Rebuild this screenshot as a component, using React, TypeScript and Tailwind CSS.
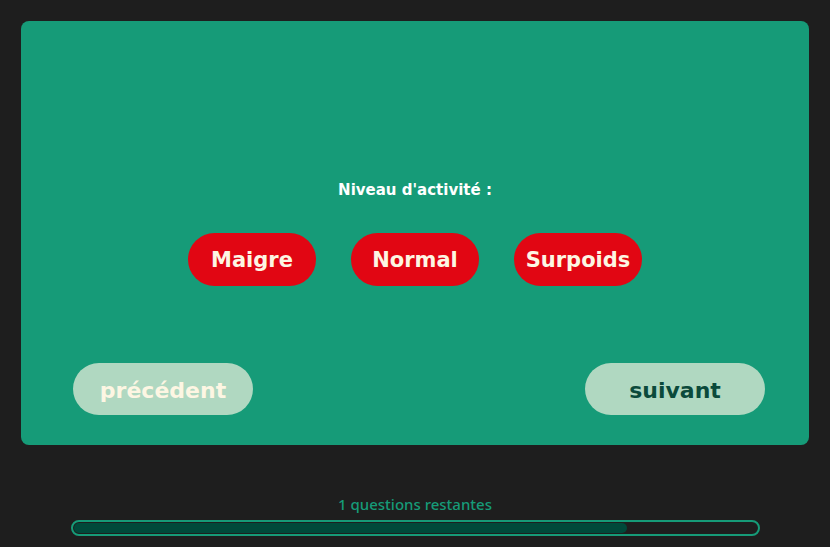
export default function App() {
  return (
    <div className="min-h-screen w-full bg-[#1e1e1e] pt-[21px] px-[21px] font-['Inter',sans-serif]">
      {/* Question card */}
      <div className="h-[424px] w-[788px] rounded-lg bg-[#169b78] flex flex-col">
        <div className="pt-[159px] text-center text-[15px] font-bold leading-5 text-white font-['DejaVu_Sans',sans-serif]">
          Niveau d'activité :
        </div>
        <div className="mt-[33px] flex justify-center gap-[35px]">
          {["Maigre", "Normal", "Surpoids"].map((label) => (
            <button
              key={label}
              className="h-[53px] w-[128px] rounded-full bg-[#e10613] pt-[2px] text-[21px] font-bold text-[#fdf6e3] font-['DejaVu_Sans',sans-serif]"
            >
              {label}
            </button>
          ))}
        </div>
        <div className="mt-[77px] flex justify-between pl-[52px] pr-[44px]">
          <button className="h-[52px] w-[180px] rounded-full bg-[#b0d8c1] pt-[3px] text-[22px] font-bold text-[#fdf6e3] font-['DejaVu_Sans',sans-serif]">
            précédent
          </button>
          <button className="h-[52px] w-[180px] rounded-full bg-[#b0d8c1] pt-[3px] text-[22px] font-bold text-[#0b4a3b] font-['DejaVu_Sans',sans-serif]">
            suivant
          </button>
        </div>
      </div>

      {/* Progress */}
      <div className="mt-[49px] text-center text-[15px] font-medium leading-5 text-[#169b78] font-['Noto_Sans',sans-serif]">
        1 questions restantes
      </div>
      <div className="ml-[50px] mt-[6px] h-[16px] w-[689px] rounded-full border-2 border-[#169b78] p-px">
        <div className="h-full w-[81%] rounded-full bg-[#00493a]" />
      </div>
    </div>
  );
}
